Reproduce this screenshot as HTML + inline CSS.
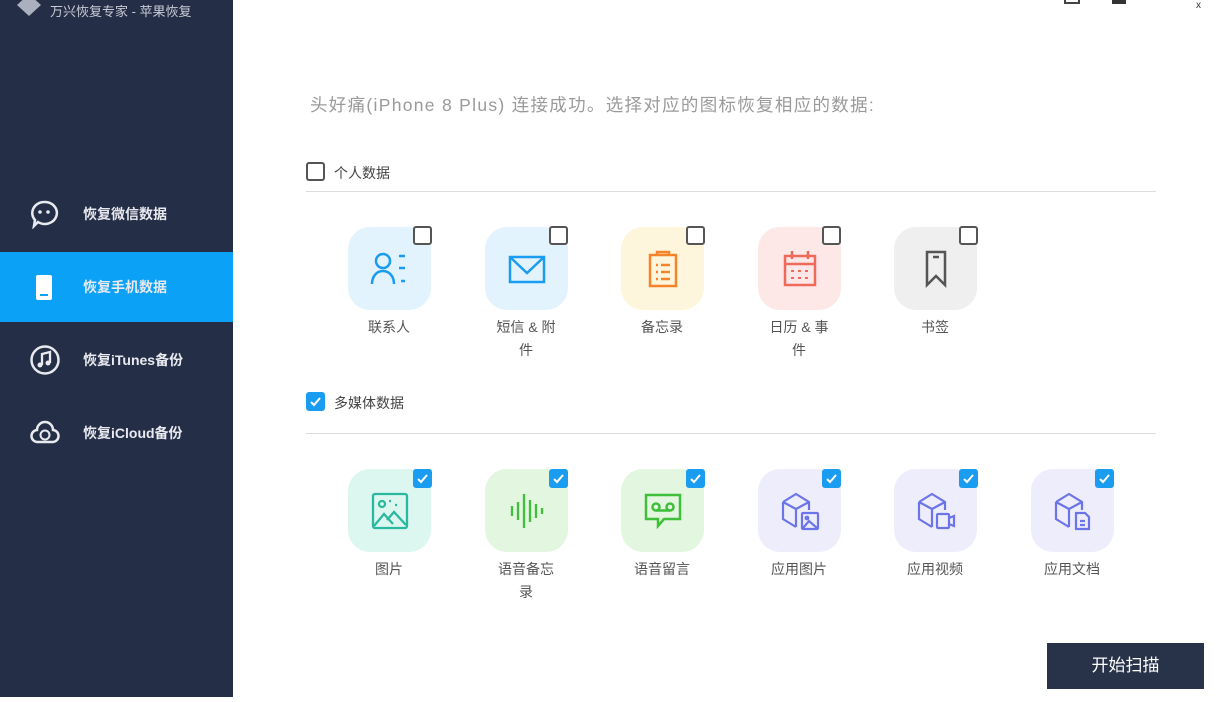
<!DOCTYPE html>
<html><head><meta charset="utf-8"><style>
*{margin:0;padding:0;box-sizing:border-box}
body{width:1217px;height:702px;background:#fff;position:relative;overflow:hidden;font-family:"Liberation Sans","Noto Sans CJK SC",sans-serif}
.side{position:absolute;left:0;top:0;width:233px;height:697px;background:#252e47}
.abs{position:absolute}
.nav{position:absolute;left:0;width:233px;height:70px;color:#e8eaef;font-size:14px;font-weight:bold}
.nav span{position:absolute;left:83px;top:50%;transform:translateY(-50%)}
.nav svg{position:absolute;left:29px;top:50%;transform:translateY(-50%)}
.tile{position:absolute;width:83px;height:83px;border-radius:22px}
.cb{position:absolute;width:19px;height:19px;border:2px solid #555;border-radius:3px;background:#fff}
.cb.on{background:#1a9cf0;border-color:#1a9cf0}
.lbl{position:absolute;width:90px;text-align:center;font-size:14px;color:#555;line-height:23px}
.tile svg{position:absolute;left:21px;top:21px}
</style></head><body>
<div class="side">
 <svg class="abs" style="left:16px;top:0" width="26" height="16"><path d="M13 -6 L25 5 L13 16 L1 5Z" fill="#aab0bd"/></svg>
 <div class="abs" style="left:50px;top:1px;color:#c8ccd6;font-size:13px">万兴恢复专家 - 苹果恢复</div>
 <div class="nav" style="top:179px"><svg width="30" height="30" viewBox="0 0 30 30"><path d="M15 3a12 11 0 1 1-6 20l-4 4 1-6A12 11 0 0 1 15 3z" fill="none" stroke="#e8eaef" stroke-width="2.5"/><circle cx="11" cy="13" r="1.8" fill="#e8eaef"/><circle cx="19" cy="13" r="1.8" fill="#e8eaef"/></svg><span>恢复微信数据</span></div>
 <div class="nav" style="top:252px;background:#0aa1f7"><svg width="30" height="30" viewBox="0 0 30 30"><rect x="7" y="3" width="16" height="25" rx="2" fill="#fff"/><rect x="11" y="22" width="8" height="2" fill="#0aa1f7"/></svg><span>恢复手机数据</span></div>
 <div class="nav" style="top:325px"><svg width="32" height="32" viewBox="0 0 32 32"><circle cx="16" cy="16" r="13.5" fill="none" stroke="#e8eaef" stroke-width="2.5"/><path d="M13 21V10l8-2v11" fill="none" stroke="#e8eaef" stroke-width="2.3"/><circle cx="11" cy="21" r="2.5" fill="#e8eaef"/><circle cx="19" cy="19" r="2.5" fill="#e8eaef"/></svg><span>恢复iTunes备份</span></div>
 <div class="nav" style="top:398px"><svg width="32" height="30" viewBox="0 0 32 30"><path d="M9 24a6 6 0 0 1-1-12 8 8 0 0 1 16 0 6 6 0 0 1-1 12z" fill="none" stroke="#e8eaef" stroke-width="2.5"/><circle cx="16" cy="17" r="4.5" fill="none" stroke="#e8eaef" stroke-width="2"/></svg><span>恢复iCloud备份</span></div>
</div>
<div class="abs" style="left:310px;top:92px;font-size:17.5px;letter-spacing:1.3px;color:#9a9a9a;white-space:nowrap">头好痛(iPhone 8 Plus) 连接成功。选择对应的图标恢复相应的数据:</div>
<div class="cb" style="left:306px;top:162px"></div>
<div class="abs" style="left:334px;top:163px;font-size:14px;color:#444">个人数据</div>
<div class="abs" style="left:306px;top:191px;width:850px;height:1px;background:#ddd"></div>
<div class="cb on" style="left:306px;top:392px"><svg width="15" height="15" viewBox="0 0 15 15"><path d="M3 8l3 3 6-7" fill="none" stroke="#fff" stroke-width="2"/></svg></div>
<div class="abs" style="left:334px;top:393px;font-size:14px;color:#444">多媒体数据</div>
<div class="abs" style="left:306px;top:433px;width:850px;height:1px;background:#ddd"></div>

<!-- row1 -->
<div class="tile" style="left:348px;top:227px;background:#e3f3fd"><svg width="42" height="42" viewBox="0 0 42 42" fill="none" stroke="#1a9cf0" stroke-width="2.5"><circle cx="14" cy="13" r="7"/><path d="M3 36c0-8 5-13 11-13s11 5 11 13"/><path d="M30 8h6M30 20h6M32 33h4"/></svg></div>
<div class="tile" style="left:485px;top:227px;background:#e3f3fd"><svg width="42" height="42" viewBox="0 0 42 42" fill="none" stroke="#1a9cf0" stroke-width="2.5"><rect x="4" y="9" width="34" height="25"/><path d="M4 9l17 16 17-16"/></svg></div>
<div class="tile" style="left:621px;top:227px;background:#fdf6dc"><svg width="42" height="42" viewBox="0 0 42 42" fill="none" stroke="#f5832a" stroke-width="2.5"><rect x="8" y="7" width="26" height="31"/><path d="M15 7V4h12v3"/><path d="M14 17h2M19 17h9M14 24h2M19 24h9M14 31h2M19 31h9"/></svg></div>
<div class="tile" style="left:758px;top:227px;background:#fde7e7"><svg width="42" height="42" viewBox="0 0 42 42" fill="none" stroke="#f06a5a" stroke-width="2.5"><rect x="6" y="8" width="30" height="29"/><path d="M6 16h30M13 3v8M29 3v8"/><path d="M12 23h3M19 23h3M26 23h3M12 30h3M19 30h3M26 30h3" stroke-width="2"/></svg></div>
<div class="tile" style="left:894px;top:227px;background:#efefef"><svg width="42" height="42" viewBox="0 0 42 42" fill="none" stroke="#555" stroke-width="2.5"><path d="M12 4h18v33l-9-9-9 9z"/><path d="M18 9h6"/></svg></div>
<div class="cb" style="left:413px;top:226px"></div><div class="cb" style="left:549px;top:226px"></div><div class="cb" style="left:686px;top:226px"></div><div class="cb" style="left:822px;top:226px"></div><div class="cb" style="left:959px;top:226px"></div>
<div class="lbl" style="left:344px;top:316px">联系人</div>
<div class="lbl" style="left:481px;top:316px">短信 &amp; 附<br>件</div>
<div class="lbl" style="left:617px;top:316px">备忘录</div>
<div class="lbl" style="left:754px;top:316px">日历 &amp; 事<br>件</div>
<div class="lbl" style="left:890px;top:316px">书签</div>

<!-- row2 -->
<div class="tile" style="left:348px;top:469px;background:#dcf7f0"><svg width="42" height="42" viewBox="0 0 42 42" fill="none" stroke="#2bb8a0" stroke-width="2.3"><rect x="4" y="4" width="34" height="34" rx="2"/><circle cx="13" cy="14" r="3"/><path d="M20 11h2M26 15h2"/><path d="M5 36l10-12 9 10M18 30l7-8 12 13"/></svg></div>
<div class="tile" style="left:485px;top:469px;background:#e3f6df"><svg width="42" height="42" viewBox="0 0 42 42" fill="none" stroke="#3fbf3a" stroke-width="2.3"><path d="M6 16v10M12 12v18M18 4v34M24 10v22M30 14v14M36 18v6"/></svg></div>
<div class="tile" style="left:621px;top:469px;background:#e3f6df"><svg width="42" height="42" viewBox="0 0 42 42" fill="none" stroke="#3fbf3a" stroke-width="2.5"><path d="M4 5h34v24H22l-6 7v-7H4z"/><circle cx="14" cy="17" r="3.5"/><circle cx="28" cy="17" r="3.5"/><path d="M14 20.5h14"/></svg></div>
<div class="tile" style="left:758px;top:469px;background:#eeedfc"><svg width="42" height="42" viewBox="0 0 42 42" fill="none" stroke="#6b74e8" stroke-width="2.2"><path d="M4 12L17 4l13 8v8M4 12v17l13 8M4 12l13 7 13-7M17 19v18"/><rect x="23" y="23" width="16" height="16" rx="1"/><path d="M24 38l6-7 8 7"/><circle cx="28" cy="28" r="1.3"/></svg></div>
<div class="tile" style="left:894px;top:469px;background:#eeedfc"><svg width="42" height="42" viewBox="0 0 42 42" fill="none" stroke="#6b74e8" stroke-width="2.2"><path d="M4 12L17 4l13 8v8M4 12v17l13 8M4 12l13 7 13-7M17 19v18"/><rect x="22" y="24" width="12" height="14" rx="1"/><path d="M34 28l5-2v10l-5-2"/></svg></div>
<div class="tile" style="left:1031px;top:469px;background:#eeedfc"><svg width="42" height="42" viewBox="0 0 42 42" fill="none" stroke="#6b74e8" stroke-width="2.2"><path d="M4 12L17 4l13 8v8M4 12v17l13 8M4 12l13 7 13-7M17 19v18"/><path d="M24 23h9l4 4v12H24z"/><path d="M28 31h5M28 35h5"/></svg></div>
<div class="cb on" style="left:413px;top:469px"><svg width="15" height="15" viewBox="0 0 15 15"><path d="M3 8l3 3 6-7" fill="none" stroke="#fff" stroke-width="2"/></svg></div>
<div class="cb on" style="left:549px;top:469px"><svg width="15" height="15" viewBox="0 0 15 15"><path d="M3 8l3 3 6-7" fill="none" stroke="#fff" stroke-width="2"/></svg></div>
<div class="cb on" style="left:686px;top:469px"><svg width="15" height="15" viewBox="0 0 15 15"><path d="M3 8l3 3 6-7" fill="none" stroke="#fff" stroke-width="2"/></svg></div>
<div class="cb on" style="left:822px;top:469px"><svg width="15" height="15" viewBox="0 0 15 15"><path d="M3 8l3 3 6-7" fill="none" stroke="#fff" stroke-width="2"/></svg></div>
<div class="cb on" style="left:959px;top:469px"><svg width="15" height="15" viewBox="0 0 15 15"><path d="M3 8l3 3 6-7" fill="none" stroke="#fff" stroke-width="2"/></svg></div>
<div class="cb on" style="left:1095px;top:469px"><svg width="15" height="15" viewBox="0 0 15 15"><path d="M3 8l3 3 6-7" fill="none" stroke="#fff" stroke-width="2"/></svg></div>
<div class="lbl" style="left:344px;top:558px">图片</div>
<div class="lbl" style="left:481px;top:558px">语音备忘<br>录</div>
<div class="lbl" style="left:617px;top:558px">语音留言</div>
<div class="lbl" style="left:754px;top:558px">应用图片</div>
<div class="lbl" style="left:890px;top:558px">应用视频</div>
<div class="lbl" style="left:1027px;top:558px">应用文档</div>

<div class="abs" style="left:1047px;top:643px;width:157px;height:46px;background:#283249;color:#fff;font-size:17px;text-align:center;line-height:46px">开始扫描</div>
<div class="abs" style="left:1064px;top:0;width:16px;height:4px;border:2px solid #444;border-top:none"></div>
<div class="abs" style="left:1112px;top:0;width:14px;height:4px;background:#333"></div>
<div class="abs" style="left:1196px;top:0;font-size:10px;color:#333">x</div>
</body></html>
